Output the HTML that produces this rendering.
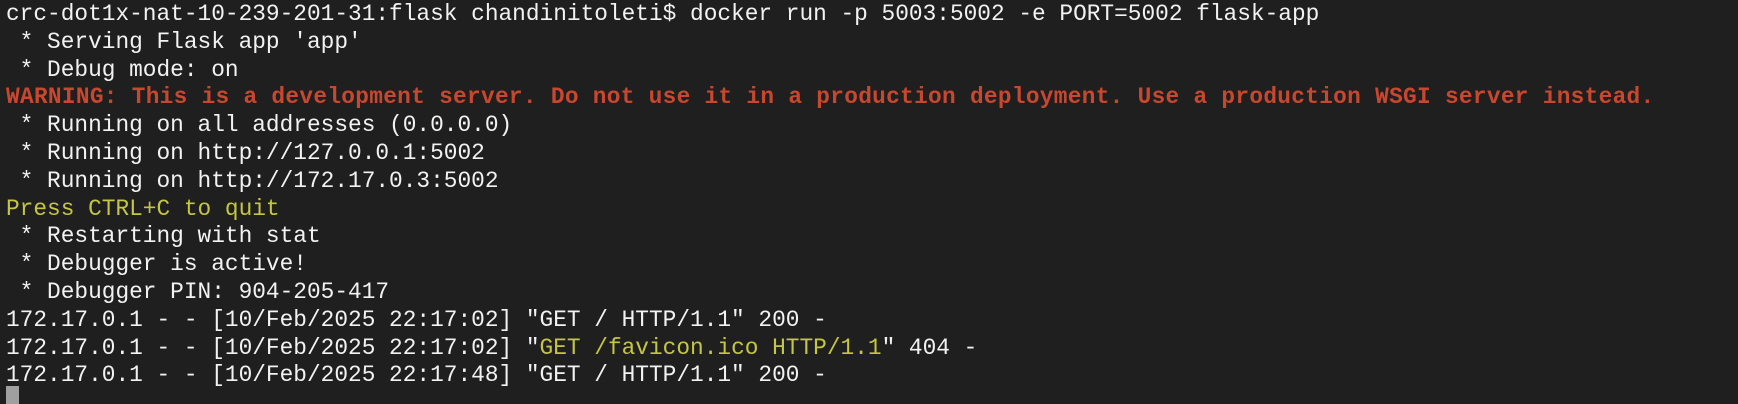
<!DOCTYPE html><html><head><style>
html,body{margin:0;padding:0;background:#1f1f1f;width:1738px;height:404px;overflow:hidden}
pre{margin:0;position:absolute;left:6px;top:1px;font-family:"Liberation Mono",monospace;font-size:22.8px;line-height:27.8px;color:#f2f2f2;white-space:pre}
.r{color:#c8472f;font-weight:bold;letter-spacing:0.29px}.y{color:#c5c641}
.c{position:absolute;left:6px;top:386px;width:13px;height:18px;background:#a0a0a0}
</style></head><body><pre>crc-dot1x-nat-10-239-201-31:flask chandinitoleti$ docker run -p 5003:5002 -e PORT=5002 flask-app
 * Serving Flask app 'app'
 * Debug mode: on
<span class="r">WARNING: This is a development server. Do not use it in a production deployment. Use a production WSGI server instead.</span>
 * Running on all addresses (0.0.0.0)
 * Running on http://127.0.0.1:5002
 * Running on http://172.17.0.3:5002
<span class="y">Press CTRL+C to quit</span>
 * Restarting with stat
 * Debugger is active!
 * Debugger PIN: 904-205-417
172.17.0.1 - - [10/Feb/2025 22:17:02] "GET / HTTP/1.1" 200 -
172.17.0.1 - - [10/Feb/2025 22:17:02] "<span class="y">GET /favicon.ico HTTP/1.1</span>" 404 -
172.17.0.1 - - [10/Feb/2025 22:17:48] "GET / HTTP/1.1" 200 -</pre><div class="c"></div></body></html>
